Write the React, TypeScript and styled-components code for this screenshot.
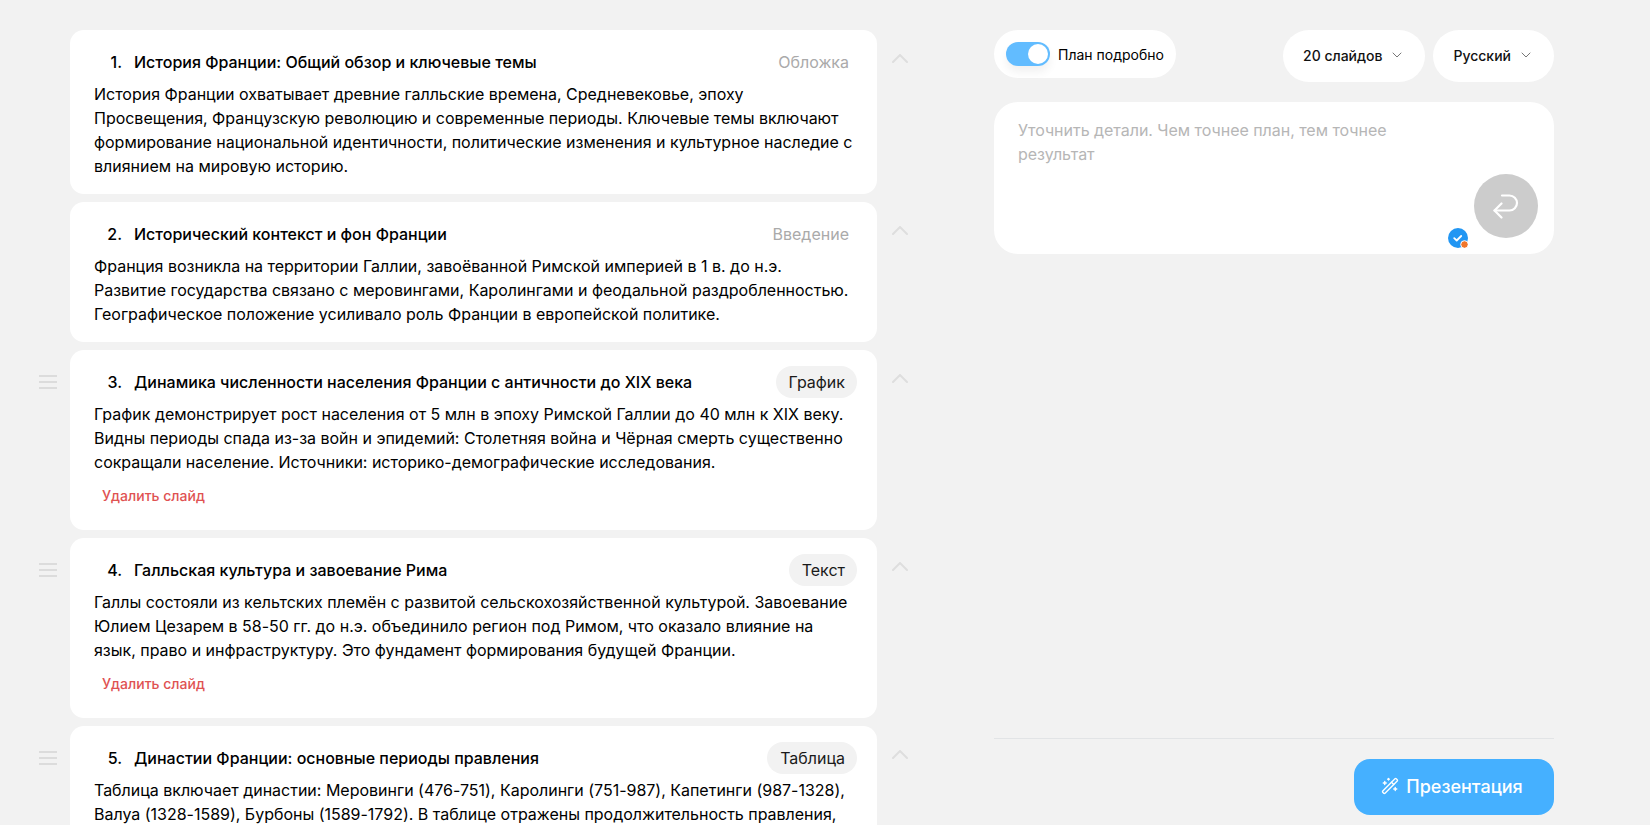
import React from 'react';
import styled, { createGlobalStyle } from 'styled-components';
import { ChevronDown, WandSparkles } from 'lucide-react';

const GlobalStyle = createGlobalStyle`
  html, body {
    margin: 0;
    height: 100%;
    overflow: hidden;
    background: #f2f2f2;
  }
  * {
    box-sizing: border-box;
  }
  body {
    font-family: Inter, 'Liberation Sans', sans-serif;
    color: #000;
  }
`;

interface Slide {
  num: number;
  title: string;
  tag: string;
  text: string[];
  locked?: boolean;
}

const slides: Slide[] = [
  {
    num: 1,
    title: 'История Франции: Общий обзор и ключевые темы',
    tag: 'Обложка',
    locked: true,
    text: [
      'История Франции охватывает древние галльские времена, Средневековье, эпоху',
      'Просвещения, Французскую революцию и современные периоды. Ключевые темы включают',
      'формирование национальной идентичности, политические изменения и культурное наследие с',
      'влиянием на мировую историю.'
    ]
  },
  {
    num: 2,
    title: 'Исторический контекст и фон Франции',
    tag: 'Введение',
    locked: true,
    text: [
      'Франция возникла на территории Галлии, завоёванной Римской империей в 1 в. до н.э.',
      'Развитие государства связано с меровингами, Каролингами и феодальной раздробленностью.',
      'Географическое положение усиливало роль Франции в европейской политике.'
    ]
  },
  {
    num: 3,
    title: 'Динамика численности населения Франции с античности до XIX века',
    tag: 'График',
    text: [
      'График демонстрирует рост населения от 5 млн в эпоху Римской Галлии до 40 млн к XIX веку.',
      'Видны периоды спада из-за войн и эпидемий: Столетняя война и Чёрная смерть существенно',
      'сокращали население. Источники: историко-демографические исследования.'
    ]
  },
  {
    num: 4,
    title: 'Галльская культура и завоевание Рима',
    tag: 'Текст',
    text: [
      'Галлы состояли из кельтских племён с развитой сельскохозяйственной культурой. Завоевание',
      'Юлием Цезарем в 58-50 гг. до н.э. объединило регион под Римом, что оказало влияние на',
      'язык, право и инфраструктуру. Это фундамент формирования будущей Франции.'
    ]
  },
  {
    num: 5,
    title: 'Династии Франции: основные периоды правления',
    tag: 'Таблица',
    text: [
      'Таблица включает династии: Меровинги (476-751), Каролинги (751-987), Капетинги (987-1328),',
      'Валуа (1328-1589), Бурбоны (1589-1792). В таблице отражены продолжительность правления,'
    ]
  }
];

export default function App() {
  return (
    <Page>
      <GlobalStyle />
      <SlideList>
        {slides.map((slide) => (
          <SlideRow key={slide.num}>
            <Grip>
              {!slide.locked && (
                <svg width="18" height="14" viewBox="0 0 18 14" fill="none" stroke="#dcdcdc" strokeWidth="2">
                  <path d="M0 1h18M0 7h18M0 13h18" />
                </svg>
              )}
            </Grip>
            <Card>
              <CardHead>
                <Num>{slide.num}.</Num>
                <Title>{slide.title}</Title>
                <Tag $locked={slide.locked}>{slide.tag}</Tag>
              </CardHead>
              <Body>
                {slide.text.map((line) => (
                  <div key={line}>{line}</div>
                ))}
              </Body>
              {!slide.locked && <Remove>Удалить слайд</Remove>}
            </Card>
            <Collapse>
              <svg width="16" height="9" viewBox="0 0 16 9" fill="none" stroke="#dedede" strokeWidth="2" strokeLinecap="round">
                <path d="M1 8l7-7 7 7" />
              </svg>
            </Collapse>
          </SlideRow>
        ))}
      </SlideList>
      <Side>
        <Controls>
          <DetailPill>
            <Switch>
              <Knob />
            </Switch>
            <DetailLabel>План подробно</DetailLabel>
          </DetailPill>
          <Selects>
            <Select>
              20 слайдов
              <ChevronDown size={16} strokeWidth={1.5} color="#777" />
            </Select>
            <Select>
              Русский
              <ChevronDown size={16} strokeWidth={1.5} color="#777" />
            </Select>
          </Selects>
        </Controls>
        <Prompt>
          <Placeholder>
            Уточнить детали. Чем точнее план, тем точнее результат
          </Placeholder>
          <Badge>
            <svg width="20" height="20" viewBox="0 0 20 20" fill="none">
              <circle cx="10" cy="10" r="10" fill="#2196f3" />
              <path d="M6.2 10.2l2.5 2.3 4.5-4.5" stroke="#fff" strokeWidth="1.8" strokeLinecap="round" strokeLinejoin="round" />
              <circle cx="16.5" cy="16.5" r="3.8" fill="#f0762b" stroke="#fff" strokeWidth="1" />
            </svg>
          </Badge>
          <Send>
            <svg width="26" height="25" viewBox="0 0 26 25" fill="none" stroke="#fff" strokeWidth="2.2" strokeLinecap="round" strokeLinejoin="round">
              <path d="M9 1.5h7.5a7.5 7.5 0 0 1 0 15H1.5" />
              <path d="M8.5 9.5l-7 7 7 7" />
            </svg>
          </Send>
        </Prompt>
        <Footer>
          <Generate>
            <WandSparkles size={18} strokeWidth={1.8} />
            Презентация
          </Generate>
        </Footer>
      </Side>
    </Page>
  );
}

const Page = styled.div`
  display: flex;
  height: 825px;
  width: 1650px;
  overflow: hidden;
  background: #f2f2f2;
`;

const SlideList = styled.div`
  display: flex;
  flex-direction: column;
  gap: 8px;
  padding-top: 30px;
  width: 994px;
  flex-shrink: 0;
`;

const SlideRow = styled.div`
  display: flex;
  align-items: flex-start;
  flex-shrink: 0;
`;

const Grip = styled.div`
  width: 70px;
  padding: 25px 0 0 39px;
  line-height: 0;
`;

const Card = styled.div`
  width: 807px;
  background: #fff;
  border-radius: 14px;
  padding: 16px 20px 16px 24px;
`;

const CardHead = styled.div`
  display: flex;
  align-items: center;
  height: 32px;
  margin-bottom: 4px;
`;

const Num = styled.span`
  width: 28px;
  text-align: right;
  margin-right: 12px;
  font-size: 16px;
  font-weight: 500;
  flex-shrink: 0;
`;

const Title = styled.span`
  flex: 1;
  font-size: 16px;
  font-weight: 500;
  white-space: nowrap;
`;

const Tag = styled.span<{ $locked?: boolean }>`
  height: 32px;
  line-height: 32px;
  border-radius: 16px;
  padding: ${(p) => (p.$locked ? '0 8px 0 12px' : '0 12px 0 13px')};
  font-size: 16px;
  background: ${(p) => (p.$locked ? 'transparent' : '#f2f2f2')};
  color: ${(p) => (p.$locked ? '#aaaaaa' : '#1a1a1a')};
`;

const Body = styled.div`
  font-size: 16px;
  line-height: 24px;
  letter-spacing: -0.012px;
  white-space: nowrap;
`;

const Remove = styled.div`
  margin: 13px 0 10px 8px;
  height: 17px;
  line-height: 17px;
  font-size: 14px;
  font-weight: 500;
  color: #e05252;
`;

const Collapse = styled.div`
  padding: 24px 0 0 15px;
  line-height: 0;
`;

const Side = styled.div`
  width: 560px;
  flex-shrink: 0;
  display: flex;
  flex-direction: column;
  padding-top: 30px;
`;

const Controls = styled.div`
  display: flex;
  justify-content: space-between;
  align-items: flex-start;
`;

const DetailPill = styled.div`
  display: flex;
  align-items: center;
  gap: 8px;
  height: 48px;
  padding: 0 12px;
  border-radius: 24px;
  background: #fff;
`;

const Switch = styled.div`
  width: 44px;
  height: 24px;
  border-radius: 12px;
  background: #62bcff;
  padding: 2px;
  display: flex;
  justify-content: flex-end;
  box-shadow: 0 6px 10px rgba(0, 0, 0, 0.06);
`;

const Knob = styled.div`
  width: 20px;
  height: 20px;
  border-radius: 50%;
  background: #fff;
`;

const DetailLabel = styled.span`
  font-size: 14px;
`;

const Selects = styled.div`
  display: flex;
  gap: 8px;
`;

const Select = styled.div`
  display: flex;
  align-items: center;
  gap: 7px;
  height: 52px;
  padding: 0 20px 2px;
  border-radius: 26px;
  background: #fff;
  font-size: 14px;
  font-weight: 500;
  color: #111;
`;

const Prompt = styled.div`
  position: relative;
  height: 152px;
  margin-top: 20px;
  background: #fff;
  border-radius: 24px;
  padding: 16px 24px;
`;

const Placeholder = styled.div`
  width: 420px;
  font-size: 16px;
  line-height: 24px;
  letter-spacing: -0.03px;
  color: #b6b6b6;
`;

const Badge = styled.div`
  position: absolute;
  left: 454px;
  top: 126px;
  line-height: 0;
`;

const Send = styled.div`
  position: absolute;
  right: 16px;
  top: 72px;
  width: 64px;
  height: 64px;
  border-radius: 50%;
  background: #cccccc;
  display: flex;
  align-items: center;
  justify-content: center;
`;

const Footer = styled.div`
  margin-top: 484px;
  border-top: 1px solid #e2e4e6;
  padding-top: 20px;
  display: flex;
  justify-content: flex-end;
`;

const Generate = styled.div`
  display: flex;
  align-items: center;
  justify-content: center;
  gap: 7px;
  width: 200px;
  height: 56px;
  padding: 0 4px 2px 0;
  border-radius: 16px;
  background: #45b0ff;
  color: #fff;
  font-size: 18px;
  font-weight: 500;
`;
